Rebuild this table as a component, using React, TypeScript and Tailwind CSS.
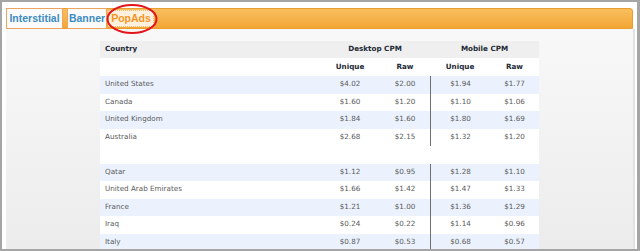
import React from 'react';

const rows: (string[] | null)[] = [
  ['United States', '$4.02', '$2.00', '$1.94', '$1.77'],
  ['Canada', '$1.60', '$1.20', '$1.10', '$1.06'],
  ['United Kingdom', '$1.84', '$1.60', '$1.80', '$1.69'],
  ['Australia', '$2.68', '$2.15', '$1.32', '$1.20'],
  null,
  ['Qatar', '$1.12', '$0.95', '$1.28', '$1.10'],
  ['United Arab Emirates', '$1.66', '$1.42', '$1.47', '$1.33'],
  ['France', '$1.21', '$1.00', '$1.36', '$1.29'],
  ['Iraq', '$0.24', '$0.22', '$1.14', '$0.96'],
  ['Italy', '$0.87', '$0.53', '$0.68', '$0.57'],
];

const cols = 'grid grid-cols-[220px_60px_50px_60px_49px]';

export default function App() {
  let stripe = 0;
  return (
    <div className="relative flex h-[251px] w-[640px] flex-col overflow-hidden border-b-2 border-l-2 border-r-[3px] border-t-2 border-[#a5a5a5] bg-white pl-1 pr-[2px] pt-[6px] font-['DejaVu_Sans',sans-serif]">
      {/* tab strip */}
      <div className="mr-[2px] flex h-[21px] shrink-0 items-stretch rounded-t-[3px] border border-[#e99d2e] bg-gradient-to-b from-[#f8bf5e] to-[#f3a634] font-['Liberation_Sans',sans-serif] text-[10.5px] font-bold">
        <div className="-my-px -ml-px flex w-[57px] items-center justify-center border border-[#eba560] bg-[#fbfbfb] text-[#3b8cc1]">
          Interstitial
        </div>
        <div className="-my-px ml-[4px] flex w-[40px] items-center justify-center border border-[#eba560] bg-[#fbfbfb] text-[#3b8cc1]">
          Banner
        </div>
        <div className="my-[1px] ml-[1px] flex w-[46px] items-center justify-center border border-dotted border-[#f6b86a] bg-[#fdf1de] text-[#f7941d]">
          PopAds
        </div>
      </div>

      {/* content panel */}
      <div className="flex-1 overflow-hidden border-r-2 border-[#e2e2e2] bg-gradient-to-b from-[#f8f8f8] to-[#ececec] pl-[94px] pt-[12px] text-[7.2px]">
        <div className="w-[439px]">
          <div className={`${cols} h-[17px] items-center bg-[#efefef] font-bold text-[#222a36]`}>
            <span className="pl-[5px]">Country</span>
            <span className="col-span-2 text-center">Desktop CPM</span>
            <span className="col-span-2 text-center">Mobile CPM</span>
          </div>
          <div className={`${cols} h-[18px] items-center bg-white font-bold text-[#222a36]`}>
            <span />
            <span className="text-center">Unique</span>
            <span className="text-center">Raw</span>
            <span className="text-center">Unique</span>
            <span className="text-center">Raw</span>
          </div>
          {rows.map((r, i) => {
            if (!r) return <div key={i} className="h-[17.5px] bg-white" />;
            const blue = stripe++ % 2 === 0;
            return (
              <div
                key={i}
                className={`${cols} h-[17.5px] items-stretch text-[#5a5a5a] ${blue ? 'bg-[#ebf2fd]' : 'bg-white'}`}
              >
                <span className="flex items-center pl-[5px]">{r[0]}</span>
                <span className="flex items-center justify-center">{r[1]}</span>
                <span className="flex items-center justify-center">{r[2]}</span>
                <span className="flex items-center justify-center border-l border-[#707070]">{r[3]}</span>
                <span className="flex items-center justify-center">{r[4]}</span>
              </div>
            );
          })}
        </div>
      </div>

      {/* red highlight ring */}
      <svg className="absolute left-[104px] top-[1px]" width="52" height="32" viewBox="0 0 52 32">
        <ellipse cx="26" cy="16" rx="24.5" ry="14" fill="none" stroke="#e3141b" strokeWidth="2" />
      </svg>
    </div>
  );
}
